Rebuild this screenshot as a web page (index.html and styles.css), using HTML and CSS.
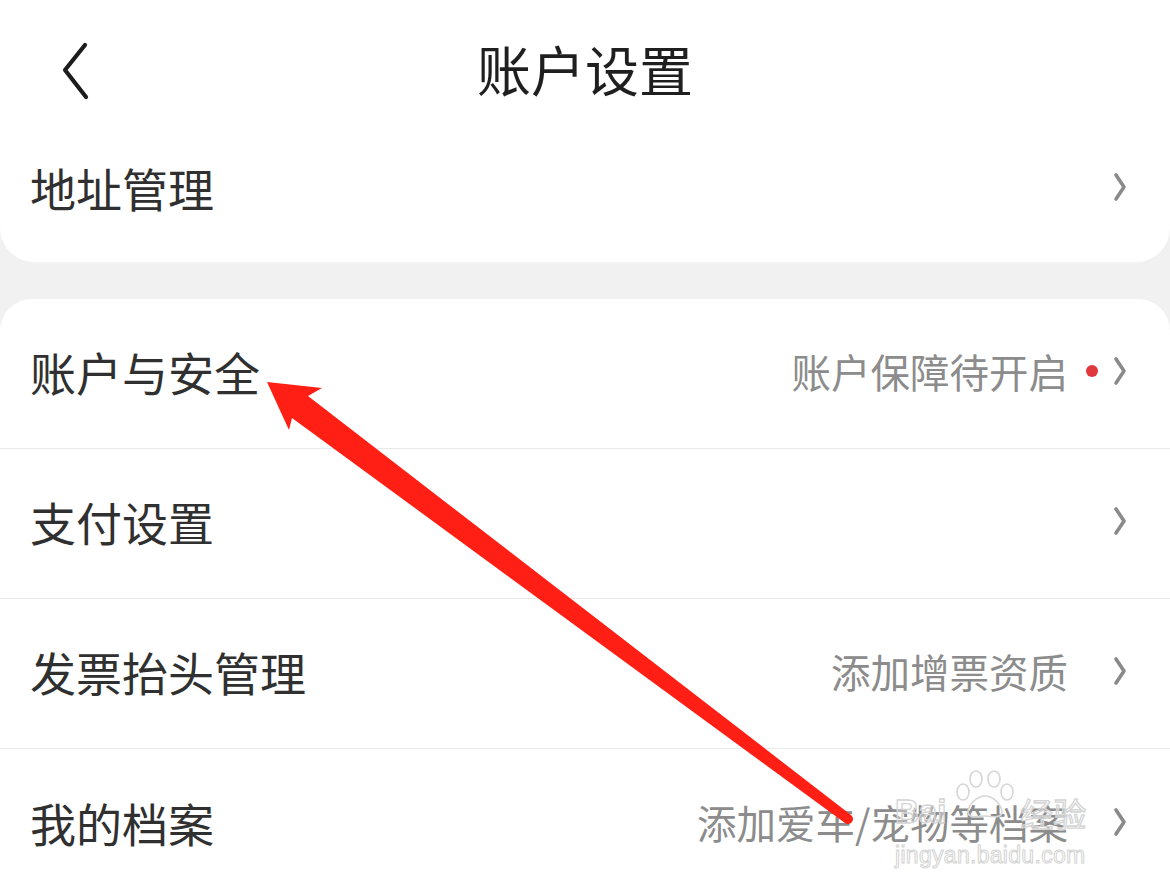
FILE: index.html
```html
<!DOCTYPE html>
<html lang="zh-CN">
<head>
<meta charset="utf-8">
<title>账户设置</title>
<link rel="stylesheet" href="styles.css">
</head>
<body>
<div class="page">
  <div class="card card-top">
    <header class="nav">
      <span class="back">
        <svg width="30" height="60" viewBox="0 0 30 60"><path d="M23 3 L3 28 L24 55" fill="none" stroke="#1c1c1c" stroke-width="4.2" stroke-linecap="round" stroke-linejoin="round"/></svg>
      </span>
      <h1 class="title">账户设置</h1>
      <span></span>
    </header>
    <div class="row row-addr">
      <span class="label">地址管理</span>
      <span class="chev"><svg width="14" height="30" viewBox="0 0 14 30"><path d="M3 3 L11 15 L3 27" fill="none" stroke="#8a8a8a" stroke-width="3.6" stroke-linecap="round" stroke-linejoin="round"/></svg></span>
    </div>
  </div>

  <div class="card card-list">
    <div class="row">
      <span class="label">账户与安全</span>
      <span class="value has-dot">账户保障待开启</span>
      <span class="dot"></span>
      <span class="chev"><svg width="14" height="30" viewBox="0 0 14 30"><path d="M3 3 L11 15 L3 27" fill="none" stroke="#8a8a8a" stroke-width="3.6" stroke-linecap="round" stroke-linejoin="round"/></svg></span>
    </div>
    <div class="row">
      <span class="label">支付设置</span>
      <span class="chev"><svg width="14" height="30" viewBox="0 0 14 30"><path d="M3 3 L11 15 L3 27" fill="none" stroke="#8a8a8a" stroke-width="3.6" stroke-linecap="round" stroke-linejoin="round"/></svg></span>
    </div>
    <div class="row">
      <span class="label">发票抬头管理</span>
      <span class="value">添加增票资质</span>
      <span class="chev"><svg width="14" height="30" viewBox="0 0 14 30"><path d="M3 3 L11 15 L3 27" fill="none" stroke="#8a8a8a" stroke-width="3.6" stroke-linecap="round" stroke-linejoin="round"/></svg></span>
    </div>
    <div class="row row-last">
      <span class="label">我的档案</span>
      <span class="value">添加爱车/宠物等档案</span>
      <span class="chev"><svg width="14" height="30" viewBox="0 0 14 30"><path d="M3 3 L11 15 L3 27" fill="none" stroke="#8a8a8a" stroke-width="3.6" stroke-linecap="round" stroke-linejoin="round"/></svg></span>
    </div>
  </div>

  <div class="watermark">
    <div class="wm-top">
      <span class="wm-bai">Bai</span>
      <svg class="wm-paw" width="62" height="50" viewBox="0 0 62 50">
        <g fill="none" stroke="#d6d6d6" stroke-width="1.6">
          <ellipse cx="9" cy="22" rx="6" ry="8"/>
          <ellipse cx="22" cy="9" rx="6" ry="8"/>
          <ellipse cx="40" cy="9" rx="6" ry="8"/>
          <ellipse cx="53" cy="22" rx="6" ry="8"/>
          <path d="M31 26 C22 26 14 36 14 42 C14 48 22 47 31 46 C40 47 48 48 48 42 C48 36 40 26 31 26 Z"/>
        </g>
      </svg>
      <span class="wm-jy">经验</span>
    </div>
    <div class="wm-url">jingyan.baidu.com</div>
  </div>

  <svg class="annotation" width="1170" height="896" viewBox="0 0 1170 896">
    <path d="M267 382 L322 388 L308 396 L851 815 A5 5 0 0 1 845 823 L292 418 L289 430 Z" fill="#ff1f14"/>
  </svg>
</div>
</body>
</html>
```

FILE: styles.css
```css
* { box-sizing: border-box; }

html, body {
  margin: 0;
  padding: 0;
  background: #f1f1f1;
}

body {
  font-family: "Noto Sans CJK SC", "Noto Sans", sans-serif;
  color: #333;
}

.page {
  position: relative;
  width: 1170px;
  height: 896px;
  overflow: hidden;
  background: #f1f1f1;
}

.card {
  background: #fff;
}

.card-top {
  border-radius: 0 0 34px 34px;
  padding-bottom: 28px;
}

.card-list {
  margin-top: 37px;
  border-radius: 32px 32px 0 0;
}

.nav {
  height: 144px;
  display: grid;
  grid-template-columns: 1fr auto 1fr;
  align-items: center;
  padding: 0 62px 0;
}

.back {
  display: flex;
  align-items: center;
}

.back svg { display: block; }

.title {
  margin: 0 0 6px;
  font-size: 54px;
  font-weight: 400;
  line-height: 1;
  color: #1f1f1f;
}

.row {
  display: flex;
  align-items: center;
  height: 150px;
  padding: 0 43px 5px 30px;
  border-bottom: 1px solid #e9e9e9;
}

.row-addr {
  height: 90px;
  border-bottom: none;
}

.row-last { border-bottom: none; }

.label {
  flex: 1;
  font-size: 46px;
  line-height: 1;
  color: #303030;
}

.value {
  font-size: 39.5px;
  line-height: 1;
  color: #8c8c8c;
  margin-right: 45px;
}

.value.has-dot { margin-right: 18px; }

.dot {
  width: 12px;
  height: 12px;
  border-radius: 50%;
  background: #e0383c;
  margin-right: 15px;
}

.chev {
  display: flex;
  align-items: center;
}

.chev svg { display: block; }

.watermark {
  position: absolute;
  left: 895px;
  top: 770px;
  width: 215px;
  pointer-events: none;
  font-family: "Liberation Sans", Arial, sans-serif;
}

.wm-top {
  display: flex;
  align-items: flex-end;
  height: 60px;
}

.wm-bai {
  font-size: 33px;
  font-weight: 700;
  color: rgba(255,255,255,0.35);
  -webkit-text-stroke: 1.3px #d4d4d4;
  line-height: 1;
  margin-bottom: 2px;
}

.wm-paw {
  margin-left: 8px;
  align-self: flex-start;
}

.wm-jy {
  font-family: "Noto Sans CJK SC", sans-serif;
  font-size: 33px;
  color: rgba(255,255,255,0.35);
  -webkit-text-stroke: 1.3px #d4d4d4;
  line-height: 1;
  margin-left: 4px;
}

.wm-url {
  font-size: 23px;
  line-height: 1;
  margin-top: 14px;
  color: rgba(255,255,255,0.4);
  -webkit-text-stroke: 1px #d4d4d4;
  letter-spacing: 0.3px;
}

.annotation {
  position: absolute;
  left: 0;
  top: 0;
  pointer-events: none;
}
```
